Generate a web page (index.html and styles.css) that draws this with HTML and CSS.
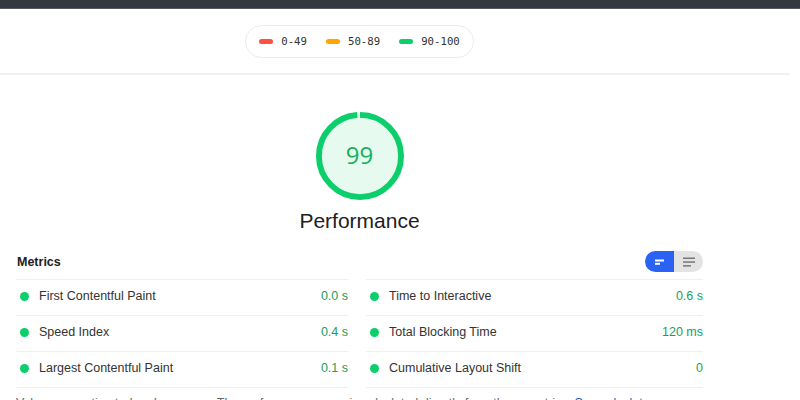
FILE: index.html
```html
<!DOCTYPE html>
<html lang="en">
<head>
    <meta charset="UTF-8">
    <meta name="viewport" content="width=device-width, initial-scale=1.0">
    <title>Lighthouse Report</title>
    <link rel="stylesheet" href="styles.css">
</head>
<body>
    <div class="topbar"></div>

    <div class="legend-bar">
        <div class="legend">
            <span class="legend-item"><i class="swatch fail"></i>0-49</span>
            <span class="legend-item"><i class="swatch average"></i>50-89</span>
            <span class="legend-item"><i class="swatch pass"></i>90-100</span>
        </div>
    </div>

    <div class="container">
        <div class="gauge-wrap">
            <svg class="gauge" viewBox="0 0 120 120" width="88" height="88">
                <circle class="gauge-base" cx="60" cy="60" r="56"></circle>
                <circle class="gauge-arc" cx="60" cy="60" r="56"
                        stroke-dasharray="347.5 351.86" transform="rotate(-90 60 60)"></circle>
            </svg>
            <div class="gauge-score">99</div>
            <div class="gauge-label">Performance</div>
        </div>

        <div class="metrics-header">
            <h2>Metrics</h2>
            <div class="toggle">
                <span class="toggle-btn active">
                    <svg width="14" height="10" viewBox="0 0 14 10">
                        <rect x="2" y="2.5" width="9" height="2" fill="#fff"></rect>
                        <rect x="2" y="5.8" width="5" height="2" fill="#fff"></rect>
                    </svg>
                </span>
                <span class="toggle-btn">
                    <svg width="16" height="12" viewBox="0 0 16 12">
                        <rect x="2" y="1.5" width="12" height="1.5" fill="#777"></rect>
                        <rect x="2" y="5.3" width="12" height="1.5" fill="#777"></rect>
                        <rect x="2" y="9.1" width="8" height="1.5" fill="#777"></rect>
                    </svg>
                </span>
            </div>
        </div>

        <div class="metrics">
            <div class="metric"><i class="dot"></i><span class="metric-title">First Contentful Paint</span><span class="metric-value">0.0 s</span></div>
            <div class="metric"><i class="dot"></i><span class="metric-title">Time to Interactive</span><span class="metric-value">0.6 s</span></div>
            <div class="metric"><i class="dot"></i><span class="metric-title">Speed Index</span><span class="metric-value">0.4 s</span></div>
            <div class="metric"><i class="dot"></i><span class="metric-title">Total Blocking Time</span><span class="metric-value">120 ms</span></div>
            <div class="metric"><i class="dot"></i><span class="metric-title">Largest Contentful Paint</span><span class="metric-value">0.1 s</span></div>
            <div class="metric"><i class="dot"></i><span class="metric-title">Cumulative Layout Shift</span><span class="metric-value">0</span></div>
        </div>

        <p class="note">Values are estimated and may vary. The performance score is calculated directly from these metrics. <a href="#">See calculator.</a></p>
    </div>
</body>
</html>
```

FILE: styles.css
```css
body {
    margin: 0;
    font-family: "Liberation Sans", Arial, sans-serif;
    color: #212121;
    background: #fff;
}
.topbar {
    height: 8px;
    background: #343941;
    border-bottom: 1px solid #565b62;
}
.legend-bar {
    width: 790px;
    padding: 16px 0 15px;
    border-bottom: 2px solid #f1f1f1;
}
.legend {
    width: 229px;
    height: 33px;
    margin-left: 245px;
    box-sizing: border-box;
    border: 1px solid #ececec;
    border-radius: 17px;
    display: flex;
    align-items: center;
    justify-content: center;
    gap: 19px;
    font-family: "DejaVu Sans Mono", monospace;
    font-size: 10.7px;
    color: #333;
}
.legend-item {
    display: flex;
    align-items: center;
    gap: 8px;
}
.swatch {
    display: block;
    width: 14px;
    height: 5px;
    border-radius: 3px;
}
.swatch.fail { background: #ff4e42; }
.swatch.average { background: #ffa400; }
.swatch.pass { background: #0cce6b; }

.container {
    width: 687px;
    padding: 0 16px;
}
.gauge-wrap {
    position: relative;
    display: flex;
    flex-direction: column;
    align-items: center;
    padding-top: 37px;
}
.gauge {
    display: block;
}
.gauge-base {
    fill: #e7faf0;
    stroke: #e7faf0;
    stroke-width: 8;
}
.gauge-arc {
    fill: none;
    stroke: #0cce6b;
    stroke-width: 8;
}
.gauge-score {
    position: absolute;
    top: 36px;
    left: 0;
    right: 0;
    line-height: 88px;
    text-align: center;
    font-family: "Open Sans", sans-serif;
    font-size: 24px;
    color: #12b35d;
}
.gauge-label {
    margin-top: 8px;
    font-size: 21px;
    line-height: 26px;
    color: #212121;
}
.metrics-header {
    display: flex;
    justify-content: space-between;
    align-items: center;
    margin-top: 17px;
    height: 21px;
}
.metrics-header h2 {
    margin: 0 0 0 1px;
    font-size: 12.5px;
    font-weight: bold;
}
.toggle {
    display: flex;
    height: 21px;
    border-radius: 11px;
    overflow: hidden;
}
.toggle-btn {
    width: 29px;
    display: flex;
    align-items: center;
    justify-content: center;
    background: #e3e3e3;
}
.toggle-btn.active {
    background: #2a62f4;
}
.metrics {
    display: grid;
    grid-template-columns: 332px 1fr;
    column-gap: 18px;
    margin-top: 7px;
}
.metric {
    display: flex;
    align-items: center;
    height: 36px;
    box-sizing: border-box;
    padding: 0 0 3px 4px;
    border-top: 1px solid #efefef;
    font-size: 12.5px;
}
.metric:nth-last-child(-n+2) {
    height: 37px;
    border-bottom: 1px solid #efefef;
}
.dot {
    width: 9px;
    height: 9px;
    border-radius: 50%;
    background: #0cce6b;
    margin-right: 10px;
}
.metric-title {
    flex: 1;
    color: #333;
}
.metric-value {
    color: #18a058;
}
.note {
    margin: 6px 0 0;
    font-size: 12.5px;
    line-height: 18px;
    color: #666;
}
.note a {
    color: #1a5fd0;
    text-decoration: none;
}
```
